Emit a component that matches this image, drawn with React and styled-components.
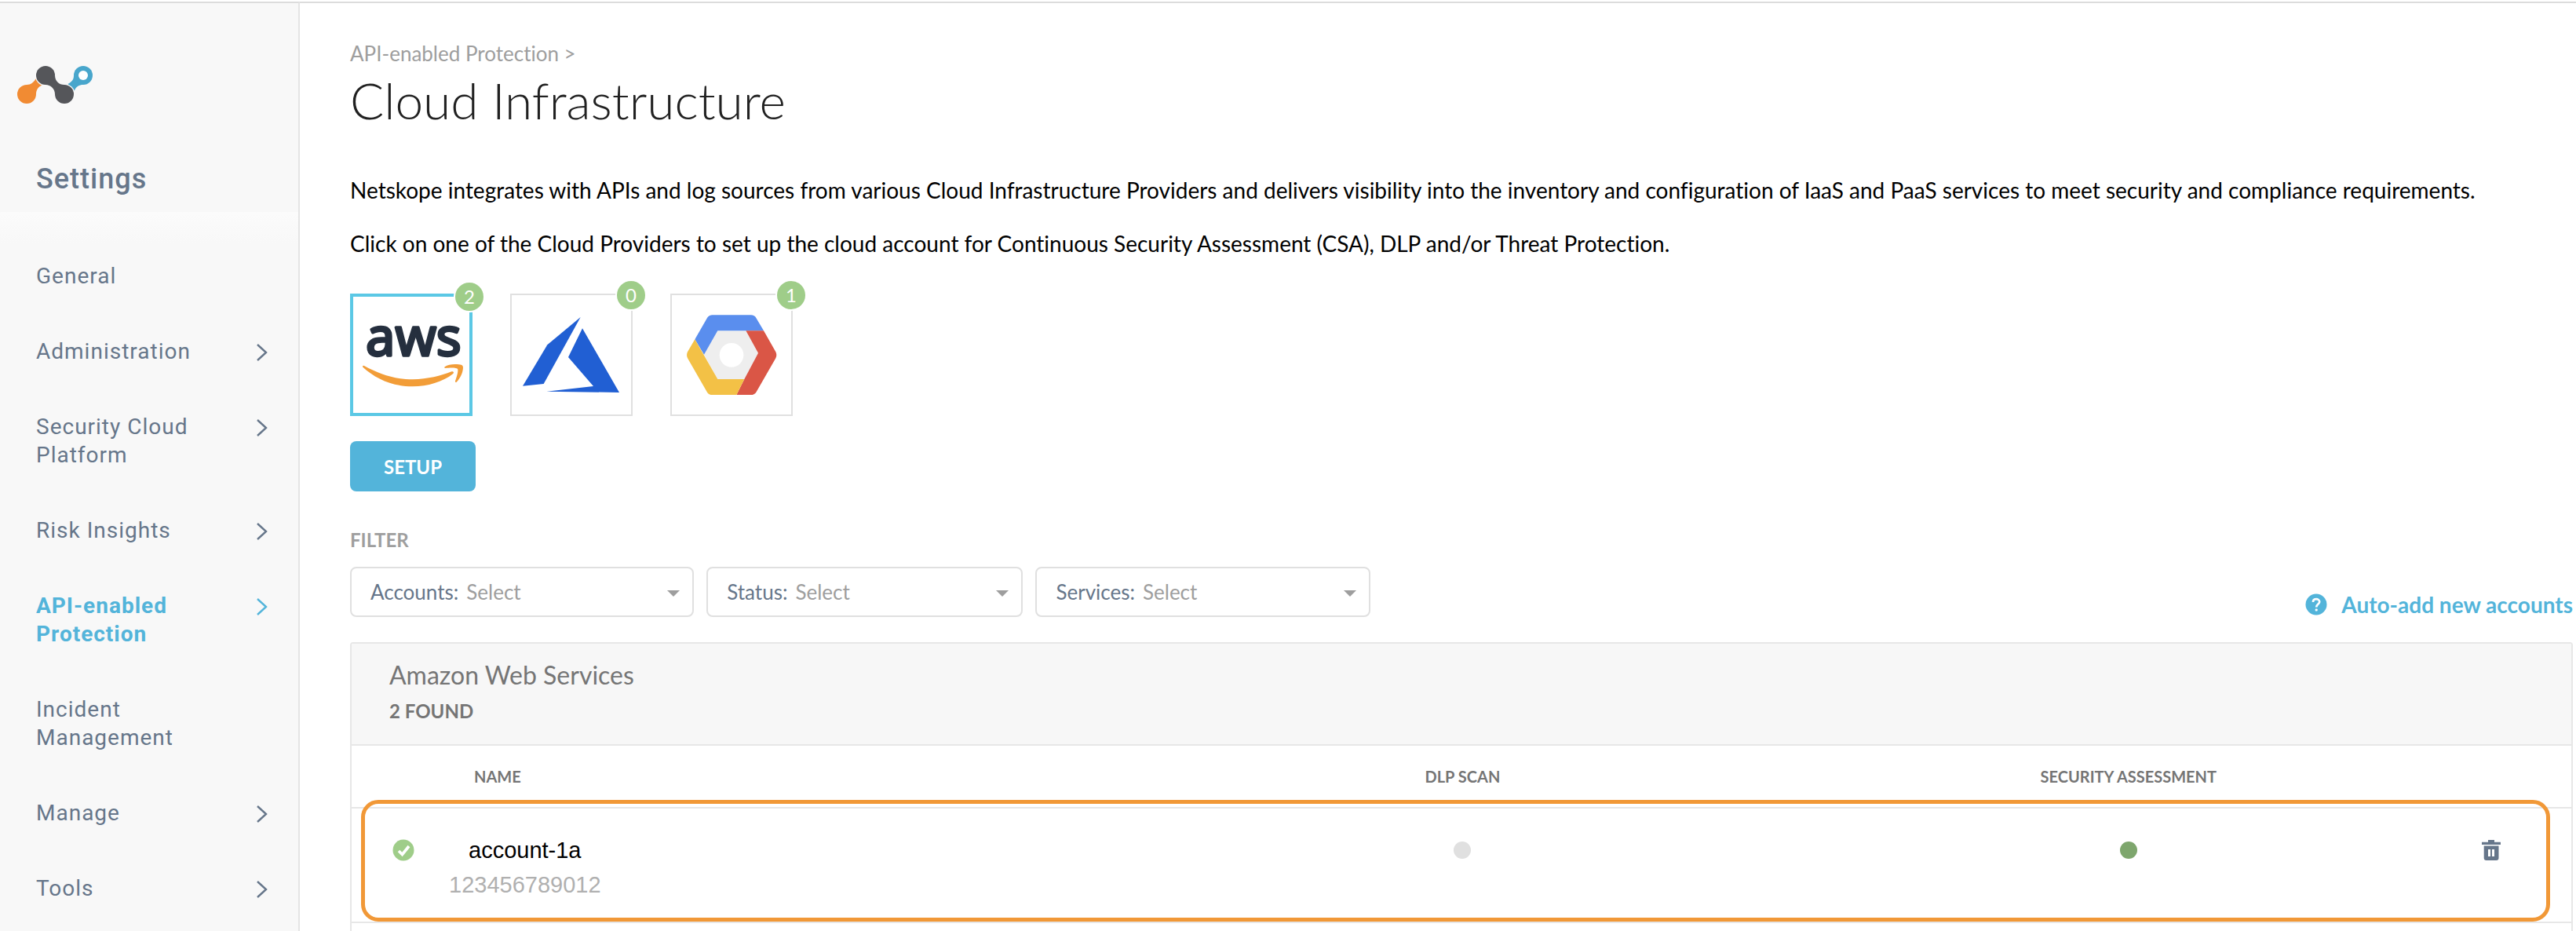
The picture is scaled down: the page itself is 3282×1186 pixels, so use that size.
import React from "react";
import styled, { createGlobalStyle } from "styled-components";

const color = {
  slate: "#66768a",
  blue: "#53b4da",
  line: "#e7e7e7",
  control: "#e0e0e0",
  panel: "#f7f7f7",
  green: "#9fcd89",
  grey: "#757575",
  muted: "#9e9e9e",
  highlight: "#f19837",
};

const lato = `Lato, "Noto Sans", sans-serif`;
const roboto = `Roboto, "Noto Sans", sans-serif`;
const arial = `"Liberation Sans", Arial, sans-serif`;

const GlobalStyle = createGlobalStyle`
  *, *::before, *::after { box-sizing: border-box; }
  body {
    margin: 0;
    background: #fff;
    font-family: ${lato};
    font-variant-ligatures: none;
    color: #000;
  }
  h1, h2, p, ul { margin: 0; padding: 0; }
  a { text-decoration: none; color: inherit; }
  button { font: inherit; cursor: pointer; }
  svg { display: block; }
`;

const Page = styled.div`
  display: flex;
  min-height: 100vh;
  padding-top: 2px;
`;

const Sidebar = styled.aside`
  flex: 0 0 382px;
  display: flex;
  flex-direction: column;
  border-top: 2px solid #dcdcdc;
  border-right: 2px solid #e4e4e4;
  background: #f8f8f8;
  font-family: ${roboto};
  color: ${color.slate};
  letter-spacing: 1px;
`;

const Brand = styled.a`
  display: block;
  padding: 80px 22px 0;
`;

const SidebarTitle = styled.h2`
  padding: 74px 46px 20px;
  font-size: 36px;
  line-height: 44px;
  font-weight: 500;
`;

const Nav = styled.nav`
  flex: 1;
  padding: 64px 39px 0 46px;
  background: linear-gradient(#fbfbfb, #f8f8f8 40px);
`;

const NavList = styled.ul`
  display: flex;
  flex-direction: column;
  gap: 60px;
  list-style: none;
`;

const NavLink = styled.a`
  display: flex;
  justify-content: space-between;
  gap: 48px;
  font-size: 28px;
  line-height: 36px;
  font-weight: ${(p) => (p.$active ? 700 : 400)};
  color: ${(p) => (p.$active ? color.blue : color.slate)};
`;

const ChevronIcon = styled.svg`
  flex: none;
  width: 14px;
  height: 24px;
  margin-top: 7px;
`;

const Main = styled.main`
  flex: 1;
  min-width: 0;
  display: flex;
  flex-direction: column;
  padding: 48px 4px 0 64px;
  border-top: 2px solid #dcdcdc;
`;

const Breadcrumb = styled.nav`
  font-size: 26px;
  line-height: 32px;
  color: ${color.muted};
`;

const PageTitle = styled.h1`
  margin-top: 4px;
  font-size: 64px;
  line-height: 80px;
  font-weight: 300;
  color: #212121;
`;

const Intro = styled.div`
  display: flex;
  flex-direction: column;
  gap: 32px;
  margin-top: 56px;
  font-size: 28px;
  line-height: 36px;
`;

const Providers = styled.div`
  display: flex;
  gap: 48px;
  margin-top: 46px;
`;

const ProviderTile = styled.button`
  position: relative;
  width: 156px;
  height: 156px;
  padding: 0;
  background: #fff;
  border: ${(p) => (p.$selected ? "4px solid #5bc8e5" : `2px solid ${color.control}`)};
`;

const CountBadge = styled.span`
  position: absolute;
  top: -20px;
  right: -20px;
  width: 40px;
  height: 40px;
  border: 2px solid #fff;
  border-radius: 50%;
  background: ${color.green};
  color: #fff;
  font-size: 24px;
  line-height: 36px;
  text-align: center;
`;

const SetupButton = styled.button`
  align-self: flex-start;
  width: 160px;
  height: 64px;
  margin-top: 32px;
  border: 0;
  border-radius: 8px;
  background: ${color.blue};
  color: #fff;
  font-size: 24px;
  font-weight: 700;
`;

const FilterHeading = styled.h2`
  margin-top: 48px;
  font-size: 24px;
  line-height: 28px;
  font-weight: 700;
  color: ${color.muted};
`;

const FilterBar = styled.div`
  display: flex;
  align-items: flex-end;
  justify-content: space-between;
  margin-top: 20px;
`;

const Filters = styled.div`
  display: flex;
  gap: 16px;
`;

const FilterBox = styled.label`
  position: relative;
  display: flex;
  align-items: center;
  gap: 10px;
  height: 64px;
  padding: 0 16px 0 24px;
  border: 2px solid ${color.control};
  border-radius: 8px;
  font-size: 26px;
  color: ${color.slate};

  &::after {
    content: "";
    position: absolute;
    right: 16px;
    top: 28px;
    border: 8px solid transparent;
    border-top-color: ${color.muted};
    border-bottom-width: 0;
    pointer-events: none;
  }
`;

const FilterSelect = styled.select`
  appearance: none;
  width: 272px;
  padding: 0;
  border: 0;
  background: transparent;
  font: inherit;
  color: ${color.muted};
`;

const AutoAddLink = styled.a`
  display: flex;
  align-items: center;
  gap: 18px;
  font-size: 28px;
  line-height: 32px;
  font-weight: 700;
  color: ${color.blue};
`;

const Panel = styled.section`
  flex: 1;
  margin-top: 32px;
  border: 2px solid ${color.line};
  border-bottom: 0;
  border-radius: 4px 4px 0 0;
`;

const PanelHeader = styled.header`
  display: flex;
  flex-direction: column;
  gap: 12px;
  padding: 20px 48px 28px;
  border-bottom: 2px solid ${color.line};
  background: ${color.panel};
  color: ${color.grey};
`;

const PanelTitle = styled.h2`
  font-size: 32px;
  line-height: 40px;
  font-weight: 400;
`;

const PanelCount = styled.p`
  font-size: 24px;
  line-height: 28px;
  font-weight: 700;
`;

const Table = styled.table`
  width: 100%;
  table-layout: fixed;
  border-collapse: separate;
  border-spacing: 0;
`;

const Col = styled.col`
  width: ${(p) => p.$width};
`;

const HeadCell = styled.th`
  height: 80px;
  padding: 0 0 0 ${(p) => p.$indent || 0}px;
  border-bottom: 2px solid ${color.line};
  font-size: 20px;
  line-height: 24px;
  font-weight: 700;
  text-align: ${(p) => p.$align || "center"};
  color: ${color.grey};
`;

const Row = styled.tr`
  position: relative;
`;

const Cell = styled.td`
  height: 146px;
  padding: 31px 0 0 ${(p) => p.$indent || 0}px;
  border-bottom: 2px solid ${color.line};
  vertical-align: top;
`;

const CellLine = styled.div`
  display: flex;
  align-items: center;
  justify-content: ${(p) => (p.$center ? "center" : "flex-start")};
  height: 44px;
`;

const Account = styled.div`
  display: inline-block;
  font-family: ${arial};
  font-size: 29px;
  line-height: 44px;
  text-align: center;
`;

const AccountId = styled.div`
  color: #b0b0b0;
`;

const Dot = styled.span`
  width: 22px;
  height: 22px;
  border-radius: 50%;
  background: ${(p) => (p.$on ? "#7ea66d" : "#e0e0e0")};
`;

const IconButton = styled.button`
  padding: 0;
  border: 0;
  background: none;
  color: ${color.slate};
`;

const RowHighlight = styled.span`
  position: absolute;
  inset: -11px 27px 2px 12px;
  border: 5px solid ${color.highlight};
  border-radius: 22px;
  pointer-events: none;
`;

const Logo = () => (
  <svg width="96" height="48" viewBox="36 42 288 144" aria-hidden="true">
    <circle cx="72" cy="150" r="36" fill="#f18b33" />
    <path d="M72 114C88 114 100 104 107 90L132 115C116 122 108 134 108 150Z" fill="#f18b33" />
    <path d="M252 78C252 94 246 102 229 111L254 137C262 120 272 114 288 114Z" fill="#48a6cc" />
    <circle cx="288" cy="78" r="36" fill="#48a6cc" />
    <circle cx="288" cy="78" r="18" fill="#fff" />
    <circle cx="144" cy="78" r="40" fill="#f8f8f8" />
    <circle cx="216" cy="150" r="40" fill="#f8f8f8" />
    <path d="M180 78C180 100 196 114 216 114L180 150C180 130 164 114 144 114Z" fill="#55565a" />
    <circle cx="144" cy="78" r="36" fill="#55565a" />
    <circle cx="216" cy="150" r="36" fill="#55565a" />
  </svg>
);

const Chevron = () => (
  <ChevronIcon viewBox="0 0 14 24" fill="none" stroke="currentColor" strokeWidth="2.4" aria-hidden="true">
    <path d="M1 2L12 12L1 22" />
  </ChevronIcon>
);

const AwsLogo = () => (
  <svg width="148" height="148" viewBox="30 84 444 444" role="img" aria-label="Amazon Web Services">
    <text
      x="78"
      y="310"
      fontFamily="Noto Sans, sans-serif"
      fontSize="200"
      fill="#252f3e"
      stroke="#252f3e"
      strokeWidth="10"
      strokeLinejoin="round"
    >
      aws
    </text>
    <g fill="#f29d38">
      <path d="M66 350Q67 345 72 348C130 380 190 400 258 400C315 399 365 386 406 370C413 368 417 374 411 379C372 410 315 427 257 427C180 427 115 397 67 353Z" />
      <path d="M380 352C395 341 425 340 445 345Q450 347 450 355C449 375 440 395 425 410Q419 413 420 406C426 390 431 372 430 362C428 354 400 355 383 357Q376 357 380 352Z" />
    </g>
  </svg>
);

const AzureLogo = () => (
  <svg width="152" height="152" viewBox="36 78 456 456" role="img" aria-label="Microsoft Azure">
    <g fill="#215fd3">
      <path d="M299 162L172 268L78 425L158 417Z" />
      <path d="M306 205L252 315L348 426L169 446L447 450Z" />
    </g>
  </svg>
);

const GcpLogo = () => (
  <svg width="152" height="152" viewBox="648 78 456 456" role="img" aria-label="Google Cloud Platform">
    <path d="M823 214H931L978 299L925 399H823L771 305Z" fill="#eee" />
    <path d="M736 247L783 165Q790 154 803 154H950Q964 154 970 165L999 214H823L771 305Z" fill="#5a8eee" />
    <path d="M931 214H999L1045 295Q1051 307 1045 319L970 449Q963 459 950 459H895L925 399L978 299Z" fill="#da5646" />
    <path d="M736 247L823 399H925L895 459H803Q789 459 783 449L708 319Q702 307 708 295Z" fill="#f3c146" />
    <circle cx="876" cy="307" r="46" fill="#fff" />
  </svg>
);

const HelpIcon = () => (
  <svg width="28" height="28" viewBox="0 0 28 28" aria-hidden="true">
    <circle cx="14" cy="14" r="13.5" fill="currentColor" />
    <path d="M10 11C10 8.600 11.700 7.200 14 7.200S18.200 8.700 18.200 10.800C18.200 13.400 14.200 13.800 14.200 17.600" fill="none" stroke="#fff" strokeWidth="2.700" />
    <rect x="12.700" y="19.400" width="3" height="3" rx="1" fill="#fff" />
  </svg>
);

const CheckIcon = () => (
  <svg width="28" height="28" viewBox="0 0 28 28" role="img" aria-label="Connected">
    <circle cx="14" cy="14" r="13.5" fill={color.green} />
    <path d="M8 15L12.500 19.500L21 9" fill="none" stroke="#fff" strokeWidth="3.600" />
  </svg>
);

const TrashIcon = () => (
  <svg width="24" height="26" viewBox="0 0 24 26" fill="currentColor" aria-hidden="true">
    <path d="M8 0H16V2.700H24V6H0V2.700H8Z" />
    <path fillRule="evenodd" d="M2.700 7.500H21.500V23Q21.500 26 18.500 26H5.700Q2.700 26 2.700 23ZM8 12V21H11V12ZM13 12V21H16V12Z" />
  </svg>
);

const navItems = [
  { label: "General" },
  { label: "Administration", expandable: true },
  { label: "Security Cloud Platform", expandable: true },
  { label: "Risk Insights", expandable: true },
  { label: "API-enabled Protection", expandable: true, active: true },
  { label: "Incident Management" },
  { label: "Manage", expandable: true },
  { label: "Tools", expandable: true },
];

const providers = [
  { id: "aws", count: 2, logo: AwsLogo, selected: true },
  { id: "azure", count: 0, logo: AzureLogo },
  { id: "gcp", count: 1, logo: GcpLogo },
];

const filters = ["Accounts", "Status", "Services"];

const accounts = [{ name: "account-1a", id: "123456789012", dlp: false, assessment: true }];

export default function App() {
  return (
    <>
      <GlobalStyle />
      <Page>
        <Sidebar>
          <Brand href="#home" aria-label="Netskope">
            <Logo />
          </Brand>
          <SidebarTitle>Settings</SidebarTitle>
          <Nav aria-label="Settings">
            <NavList>
              {navItems.map((item) => (
                <li key={item.label}>
                  <NavLink href="#settings" $active={item.active}>
                    <span>{item.label}</span>
                    {item.expandable ? <Chevron /> : <ChevronIcon aria-hidden="true" />}
                  </NavLink>
                </li>
              ))}
            </NavList>
          </Nav>
        </Sidebar>
        <Main>
          <Breadcrumb aria-label="Breadcrumb">
            <a href="#api">API-enabled Protection</a> &gt;
          </Breadcrumb>
          <PageTitle>Cloud Infrastructure</PageTitle>
          <Intro>
            <p>
              Netskope integrates with APIs and log sources from various Cloud Infrastructure Providers and delivers
              visibility into the inventory and configuration of IaaS and PaaS services to meet security and compliance
              requirements.
            </p>
            <p>
              Click on one of the Cloud Providers to set up the cloud account for Continuous Security Assessment (CSA),
              DLP and/or Threat Protection.
            </p>
          </Intro>
          <Providers>
            {providers.map(({ id, count, logo: ProviderLogo, selected }) => (
              <ProviderTile key={id} type="button" $selected={selected} aria-pressed={!!selected}>
                <ProviderLogo />
                <CountBadge>{count}</CountBadge>
              </ProviderTile>
            ))}
          </Providers>
          <SetupButton type="button">SETUP</SetupButton>
          <FilterHeading>FILTER</FilterHeading>
          <FilterBar>
            <Filters>
              {filters.map((name) => (
                <FilterBox key={name} htmlFor={`filter-${name}`}>
                  {name}:
                  <FilterSelect id={`filter-${name}`} defaultValue="">
                    <option value="">Select</option>
                  </FilterSelect>
                </FilterBox>
              ))}
            </Filters>
            <AutoAddLink href="#auto-add">
              <HelpIcon />
              Auto-add new accounts
            </AutoAddLink>
          </FilterBar>
          <Panel>
            <PanelHeader>
              <PanelTitle>Amazon Web Services</PanelTitle>
              <PanelCount>2 FOUND</PanelCount>
            </PanelHeader>
            <Table>
              <colgroup>
                <Col $width="124px" />
                <Col $width="auto" />
                <Col $width="30%" />
                <Col $width="30%" />
                <Col $width="140px" />
              </colgroup>
              <thead>
                <tr>
                  <HeadCell aria-label="State" />
                  <HeadCell scope="col" $align="left" $indent={32}>
                    NAME
                  </HeadCell>
                  <HeadCell scope="col">DLP SCAN</HeadCell>
                  <HeadCell scope="col">SECURITY ASSESSMENT</HeadCell>
                  <HeadCell aria-label="Actions" />
                </tr>
              </thead>
              <tbody>
                {accounts.map((account) => (
                  <Row key={account.id}>
                    <Cell $indent={52}>
                      <CellLine>
                        <CheckIcon />
                      </CellLine>
                      <RowHighlight />
                    </Cell>
                    <Cell>
                      <Account>
                        <div>{account.name}</div>
                        <AccountId>{account.id}</AccountId>
                      </Account>
                    </Cell>
                    <Cell>
                      <CellLine $center>
                        <Dot $on={account.dlp} />
                      </CellLine>
                    </Cell>
                    <Cell>
                      <CellLine $center>
                        <Dot $on={account.assessment} />
                      </CellLine>
                    </Cell>
                    <Cell $indent={26}>
                      <CellLine>
                        <IconButton type="button" aria-label="Delete account">
                          <TrashIcon />
                        </IconButton>
                      </CellLine>
                    </Cell>
                  </Row>
                ))}
              </tbody>
            </Table>
          </Panel>
        </Main>
      </Page>
    </>
  );
}
